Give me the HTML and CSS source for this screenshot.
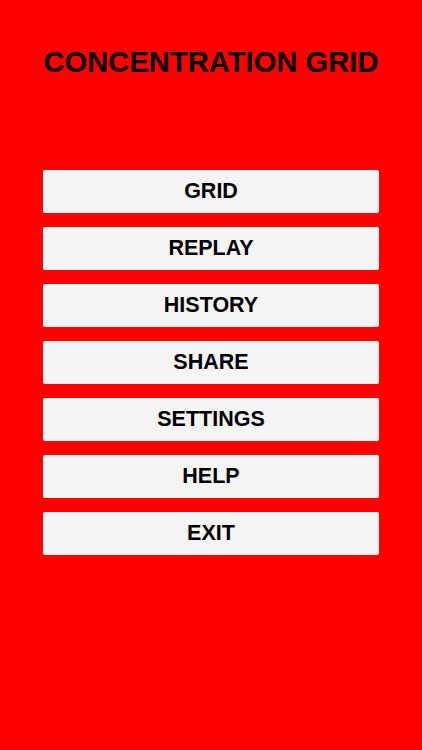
FILE: index.html
```html
<!DOCTYPE html>
<html lang="en">
<head>
    <meta charset="UTF-8">
    <meta name="viewport" content="width=device-width, initial-scale=1.0">
    <title>Concentration Grid</title>
    <link rel="stylesheet" href="styles.css">
</head>
<body>
    <div class="screen">
        <h1 class="title">CONCENTRATION GRID</h1>
        <div class="menu">
            <button class="menu-btn">GRID</button>
            <button class="menu-btn">REPLAY</button>
            <button class="menu-btn">HISTORY</button>
            <button class="menu-btn">SHARE</button>
            <button class="menu-btn">SETTINGS</button>
            <button class="menu-btn">HELP</button>
            <button class="menu-btn">EXIT</button>
        </div>
    </div>
</body>
</html>
```

FILE: styles.css
```css
html, body {
    margin: 0;
    padding: 0;
    height: 100%;
}

body {
    font-family: "Liberation Sans", Arial, sans-serif;
    background-color: #ff0000;
    color: #000;
}

.screen {
    padding: 0 43px;
}

.title {
    margin: 0;
    padding-top: 44px;
    height: 36px;
    line-height: 36px;
    font-size: 29.2px;
    font-weight: bold;
    text-align: center;
    white-space: nowrap;
}

.menu {
    margin-top: 90px;
    display: flex;
    flex-direction: column;
    gap: 14px;
}

.menu-btn {
    height: 43px;
    width: 100%;
    background-color: #f4f4f4;
    border: none;
    border-radius: 2px;
    font-family: "Liberation Sans", Arial, sans-serif;
    font-size: 21.5px;
    font-weight: bold;
    color: #000;
    padding: 0 0 1px;
}
```
